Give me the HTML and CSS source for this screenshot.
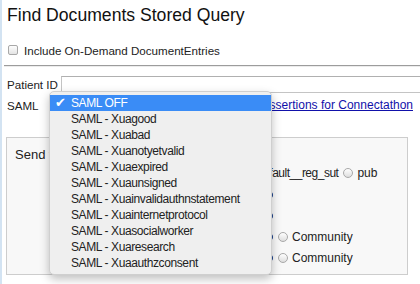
FILE: index.html
```html
<!DOCTYPE html>
<html lang="en">
<head>
    <meta charset="UTF-8">
    <title>Find Documents Stored Query</title>
    <link rel="stylesheet" href="styles.css">
</head>
<body>
<div class="page">
    <h1 class="title">Find Documents Stored Query</h1>

    <label class="check-row"><span class="checkbox"></span>Include On-Demand DocumentEntries</label>

    <hr class="rule">

    <div class="field-row">
        <span class="field-label">Patient ID</span>
        <span class="text-input"></span>
    </div>
    <div class="field-row saml-row">
        <span class="field-label">SAML</span>
        <span class="select-box"></span>
        <a class="help-link" href="#">Assertions for Connectathon</a>
    </div>

    <div class="send-box">
        <div class="send-title">Send to</div>
        <div class="site-row first">
            <span class="lead"></span>
            <span class="radio"></span><span class="site-name tight">default__reg_sut</span>
            <span class="radio"></span><span class="site-name">pub</span>
        </div>
        <div class="site-row">
            <span class="lead"></span>
            <span class="radio on"></span>
        </div>
        <div class="site-row">
            <span class="lead"></span>
            <span class="radio on"></span>
        </div>
        <div class="site-row">
            <span class="lead"></span>
            <span class="radio on"></span>
            <span class="radio"></span><span class="site-name">Community</span>
        </div>
        <div class="site-row">
            <span class="lead"></span>
            <span class="radio on"></span>
            <span class="radio"></span><span class="site-name">Community</span>
        </div>
    </div>

    <!-- open popup of the SAML select -->
    <ul class="select-menu">
        <li class="selected"><span class="tick">✔</span>SAML OFF</li>
        <li>SAML - Xuagood</li>
        <li>SAML - Xuabad</li>
        <li>SAML - Xuanotyetvalid</li>
        <li>SAML - Xuaexpired</li>
        <li>SAML - Xuaunsigned</li>
        <li>SAML - Xuainvalidauthnstatement</li>
        <li>SAML - Xuainternetprotocol</li>
        <li>SAML - Xuasocialworker</li>
        <li>SAML - Xuaresearch</li>
        <li>SAML - Xuaauthzconsent</li>
    </ul>
</div>
</body>
</html>
```

FILE: styles.css
```css
body {
    margin: 0;
    min-height: 284px;
    border-left: 2px solid #d3e3f2;
    background: #fff;
    font-family: "Liberation Sans", Arial, sans-serif;
    color: #222;
    font-size: 12px;
}
.page {
    position: relative;
    padding: 4px 0 0 5px;
    overflow: hidden;
    height: 280px;
}
.title {
    margin: 0;
    font-size: 17.6px;
    font-weight: normal;
    line-height: 22px;
    color: #111;
}
.check-row {
    display: flex;
    align-items: center;
    margin-top: 16px;
    height: 16px;
    padding-left: 1px;
    font-size: 11.6px;
}
.checkbox {
    width: 8px;
    height: 8px;
    margin-right: 6px;
    border: 1px solid #a8a8a8;
    border-radius: 2px;
    background: linear-gradient(#fdfdfd, #e4e4e4);
}
.rule {
    margin: 7px 0 9px -3px;
    height: 0;
    border: 0;
    border-top: 1px solid #9c9c9c;
    border-bottom: 1px solid #ececec;
}
.field-row {
    display: flex;
    align-items: center;
    height: 17px;
}
.field-label {
    width: 54px;
    flex: none;
    font-size: 11.6px;
}
.text-input {
    flex: 1;
    height: 17px;
    box-sizing: border-box;
    border: 1px solid #c4c4c4;
    border-top-color: #b0b0b0;
    border-right: 0;
    background: #fff;
}
.saml-row {
    margin-top: 4px;
    height: 16px;
    padding-right: 7px;
}
.select-box {
    width: 150px;
}
.help-link {
    margin-left: auto;
    color: #1111aa;
    text-decoration: underline;
}
.send-box {
    margin: 24px 12px 0 -1px;
    height: 138px;
    box-sizing: border-box;
    border: 1px solid #cdcdcd;
    background: #f8f8f8;
    padding: 9px 0 0 8px;
}
.send-title {
    font-size: 13px;
    line-height: 16px;
}
.site-row {
    display: flex;
    align-items: center;
    height: 21px;
}
.site-row.first {
    height: 16px;
    margin: 2px 0 3px;
}
.lead {
    width: 248px;
    flex: none;
}
.first .lead {
    width: 228px;
}
.radio {
    width: 8px;
    height: 8px;
    flex: none;
    border: 1px solid #a9a9a9;
    border-radius: 50%;
    background: linear-gradient(#fefefe, #dedede);
    margin-right: 4px;
}
.radio.on {
    background: #1f4fa8;
    border-color: #1a3f88;
    margin-right: 5px;
}
.site-name {
    margin-right: 5px;
}
.site-name.tight {
    letter-spacing: -0.5px;
}
.select-menu {
    position: absolute;
    left: 47px;
    top: 91px;
    width: 223px;
    box-sizing: border-box;
    margin: 0;
    padding: 3px 0;
    list-style: none;
    background: #efefef;
    border: 1px solid #cfcfcf;
    border-radius: 5px;
    box-shadow: 0 4px 10px rgba(0, 0, 0, 0.25);
    font-size: 12px;
    letter-spacing: -0.4px;
    color: #222;
}
.select-menu li {
    position: relative;
    height: 16px;
    line-height: 16px;
    padding-left: 21px;
}
.select-menu .selected {
    background: #3a8cf6;
    color: #fff;
}
.tick {
    position: absolute;
    left: 5px;
    top: 0;
    font-family: "DejaVu Sans", sans-serif;
    font-size: 13px;
}
```
